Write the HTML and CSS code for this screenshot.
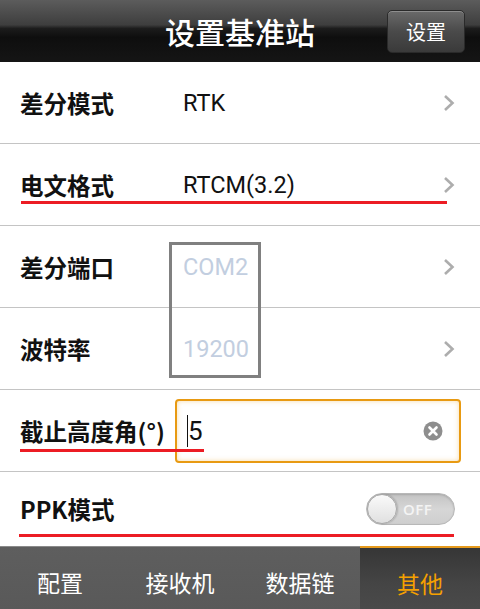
FILE: index.html
```html
<!DOCTYPE html>
<html lang="zh-CN">
<head>
<meta charset="utf-8">
<title>设置基准站</title>
<link rel="stylesheet" href="styles.css">
</head>
<body>
<div class="screen">
  <header class="topbar">
    <h1 class="title">设置基准站</h1>
    <button class="top-btn">设置</button>
  </header>

  <main class="list">
    <div class="row">
      <span class="label">差分模式</span>
      <span class="value">RTK</span>
      <svg class="chev" viewBox="0 0 12 18"><path d="M2 2 L9.5 9 L2 16"/></svg>
    </div>
    <div class="row">
      <span class="label">电文格式</span>
      <span class="value">RTCM(3.2)</span>
      <svg class="chev" viewBox="0 0 12 18"><path d="M2 2 L9.5 9 L2 16"/></svg>
      <i class="mark mark-format"></i>
    </div>
    <div class="row">
      <span class="label">差分端口</span>
      <span class="value muted">COM2</span>
      <svg class="chev" viewBox="0 0 12 18"><path d="M2 2 L9.5 9 L2 16"/></svg>
    </div>
    <div class="row">
      <span class="label">波特率</span>
      <span class="value muted">19200</span>
      <svg class="chev" viewBox="0 0 12 18"><path d="M2 2 L9.5 9 L2 16"/></svg>
    </div>
    <div class="row">
      <span class="label">截止高度角(°)</span>
      <div class="field">
        <span class="caret"></span><span class="field-text">5</span>
        <svg class="clear" viewBox="0 0 20 20">
          <circle cx="10" cy="10" r="9.5" fill="#8e8e8e"/>
          <path d="M6.5 6.5 L13.5 13.5 M13.5 6.5 L6.5 13.5" stroke="#fff" stroke-width="2.6" stroke-linecap="round"/>
        </svg>
      </div>
      <i class="mark mark-angle"></i>
    </div>
    <div class="row row-last">
      <span class="label">PPK模式</span>
      <div class="toggle">
        <span class="knob"></span>
        <span class="toggle-text">OFF</span>
      </div>
      <i class="mark mark-ppk"></i>
    </div>
    <i class="frame"></i>
  </main>

  <nav class="tabs">
    <a class="tab">配置</a>
    <a class="tab">接收机</a>
    <a class="tab">数据链</a>
    <a class="tab active">其他</a>
  </nav>
</div>
</body>
</html>
```

FILE: styles.css
```css
* { box-sizing: border-box; }

html, body {
  margin: 0;
  padding: 0;
  background: #fff;
}

body {
  font-family: Roboto, "Noto Sans CJK SC", sans-serif;
  width: 480px;
  height: 609px;
  overflow: hidden;
}

.screen {
  display: flex;
  flex-direction: column;
  width: 480px;
  height: 609px;
}

/* ---------- top bar ---------- */
.topbar {
  position: relative;
  height: 62px;
  flex: none;
  display: flex;
  align-items: center;
  justify-content: center;
  background: linear-gradient(#5c5c5c 0%, #3e3e3e 40%, #1c1c1c 46%, #0e0e0e 60%, #151515 100%);
}

.title {
  margin: 0;
  font-family: "Noto Sans CJK SC", sans-serif;
  font-weight: 500;
  font-size: 30px;
  color: #fff;
  line-height: 1;
}

.top-btn {
  position: absolute;
  right: 15px;
  top: 10px;
  width: 78px;
  height: 43px;
  border: 1px solid #2a2a2a;
  border-radius: 5px;
  background: linear-gradient(#6a6a6a 0%, #4a4a4a 50%, #3a3a3a 100%);
  box-shadow: inset 0 1px 0 rgba(255,255,255,0.25);
  color: #fff;
  font-family: "Noto Sans CJK SC", sans-serif;
  font-size: 20px;
  padding: 0;
}

/* ---------- settings list ---------- */
.list {
  position: relative;
  flex: 1;
  display: flex;
  flex-direction: column;
}

.row {
  position: relative;
  height: 82px;
  flex: none;
  display: flex;
  align-items: center;
  padding: 0 25px 0 20px;
  border-bottom: 1px solid #c4c4c4;
}

.row-last {
  flex: 1;
  border-bottom: none;
}

.label {
  width: 163px;
  flex: none;
  font-family: "Noto Sans CJK SC", sans-serif;
  font-weight: 700;
  font-size: 23.5px;
  color: #111;
  white-space: nowrap;
}

.value {
  flex: 1;
  font-family: Roboto, sans-serif;
  font-size: 23.5px;
  color: #111;
}

.value.muted {
  color: #c2cee0;
}

.chev {
  width: 12px;
  height: 18px;
  fill: none;
  stroke: #adadad;
  stroke-width: 2.6;
}

/* red annotation strokes */
.mark {
  position: absolute;
  height: 3px;
  background: #ec1c24;
}
.mark-format { left: 21px; width: 426px; top: 57px; }
.mark-angle  { left: 20px; width: 184px; top: 59px; }
.mark-ppk    { left: 19px; width: 435px; top: 62px; }

/* grey frame around the port and baud values */
.frame {
  position: absolute;
  left: 169px;
  top: 180px;
  width: 92px;
  height: 136px;
  border: 3px solid #808080;
}

/* ---------- input field ---------- */
.field {
  margin-left: -8px;
  margin-right: -6px;
  width: 286px;
  height: 64px;
  display: flex;
  align-items: center;
  padding: 0 16px 0 10px;
  border: 2px solid #e89a12;
  border-radius: 4px;
  background: #fff;
  box-shadow: inset 0 0 5px rgba(232, 154, 18, 0.35);
}

.caret {
  width: 1px;
  height: 32px;
  background: #111;
}

.field-text {
  flex: 1;
  font-family: Roboto, sans-serif;
  font-size: 26px;
  color: #111;
}

.clear {
  width: 20px;
  height: 20px;
}

/* ---------- toggle ---------- */
.toggle {
  margin-left: auto;
  position: relative;
  width: 89px;
  height: 32px;
  border-radius: 16px;
  border: 1px solid #b8b8b8;
  background: linear-gradient(#c4c4c4, #d6d6d6 50%, #cfcfcf);
  display: flex;
  align-items: center;
  box-shadow: inset 0 1px 2px rgba(0,0,0,0.15);
}

.knob {
  width: 30px;
  height: 30px;
  border-radius: 50%;
  background: linear-gradient(#fafafa, #e0e0e0);
  border: 1px solid #a8a8a8;
  box-shadow: 1px 0 2px rgba(0,0,0,0.2);
  flex: none;
}

.toggle-text {
  margin-left: 6px;
  font-family: "Open Sans", sans-serif;
  font-weight: 600;
  font-size: 15px;
  color: #f4f4f4;
  letter-spacing: 0.5px;
}

/* ---------- bottom tabs ---------- */
.tabs {
  height: 63px;
  flex: none;
  display: grid;
  grid-template-columns: repeat(4, 1fr);
  background: linear-gradient(#5e5e5e, #595959);
  border-top: 1px solid #8a8a8a;
}

.tab {
  display: flex;
  align-items: center;
  justify-content: center;
  padding-top: 8px;
  font-family: "Noto Sans CJK SC", sans-serif;
  font-size: 23px;
  color: #fff;
}

.tab.active {
  color: #f5a000;
  margin-top: -1px;
  border-top: 2px solid #e69a1c;
  background: linear-gradient(#363636, #454545 60%, #4a4a4a);
}
```
